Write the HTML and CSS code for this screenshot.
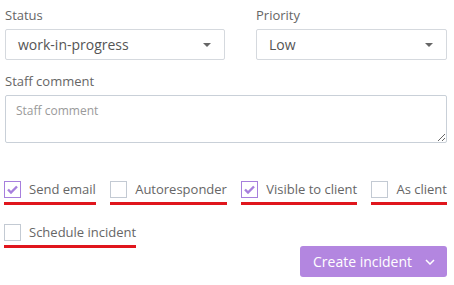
FILE: index.html
```html
<!DOCTYPE html>
<html lang="en">
<head>
  <meta charset="UTF-8">
  <title>New incident</title>
  <link rel="stylesheet" href="styles.css">
</head>
<body>
  <form class="incident-form">
    <div class="row two-cols">
      <div class="field">
        <label class="label">Status</label>
        <div class="select">
          <span>work-in-progress</span>
          <svg class="caret" width="8" height="4" viewBox="0 0 8 4"><path d="M0 0h8L4 4z" fill="#666"/></svg>
        </div>
      </div>
      <div class="field">
        <label class="label">Priority</label>
        <div class="select">
          <span>Low</span>
          <svg class="caret" width="8" height="4" viewBox="0 0 8 4"><path d="M0 0h8L4 4z" fill="#666"/></svg>
        </div>
      </div>
    </div>

    <div class="field">
      <label class="label">Staff comment</label>
      <textarea class="comment" placeholder="Staff comment"></textarea>
    </div>

    <!-- options -->
    <div class="options">
      <label class="check checked"><span class="box"><svg width="11" height="9" viewBox="0 0 11 9"><path d="M1 4.5l3 3L10 1.5" fill="none" stroke="#a77fdd" stroke-width="2.4"/></svg></span>Send email</label>
      <label class="check"><span class="box"></span>Autoresponder</label>
      <label class="check checked"><span class="box"><svg width="11" height="9" viewBox="0 0 11 9"><path d="M1 4.5l3 3L10 1.5" fill="none" stroke="#a77fdd" stroke-width="2.4"/></svg></span>Visible to client</label>
      <label class="check"><span class="box"></span>As client</label>
      <label class="check"><span class="box"></span>Schedule incident</label>
    </div>

    <div class="actions">
      <button type="button" class="btn-create">
        <span>Create incident</span>
        <svg width="10" height="6" viewBox="0 0 10 6"><path d="M1 1l4 4 4-4" fill="none" stroke="#fff" stroke-width="1.5"/></svg>
      </button>
    </div>
  </form>
</body>
</html>
```

FILE: styles.css
```css
body {
  margin: 0;
  font-family: "Open Sans", "Noto Sans", Arial, sans-serif;
  color: #666;
  background: #fff;
}

.incident-form {
  padding: 5px 7px 0 5px;
}

.two-cols {
  display: grid;
  grid-template-columns: 220px 1fr;
  gap: 31px;
}

.label {
  display: block;
  font-size: 13px;
  line-height: 20px;
  color: #666;
  margin-bottom: 4px;
}

.select {
  height: 31px;
  box-sizing: border-box;
  border: 1px solid #d5d9de;
  border-radius: 2px;
  display: flex;
  align-items: center;
  justify-content: space-between;
  padding: 0 13px 0 12px;
  font-size: 14px;
  color: #555;
}

.caret {
  margin-top: 1px;
}

.row + .field {
  margin-top: 11px;
}

.comment {
  display: block;
  width: 100%;
  height: 48px;
  box-sizing: border-box;
  border: 1px solid #c9d0d8;
  border-radius: 2px;
  padding: 6px 10px;
  font-family: inherit;
  font-size: 12px;
  color: #555;
  resize: vertical;
}

.comment::placeholder {
  color: #9a9a9a;
}

.options {
  display: flex;
  flex-wrap: wrap;
  justify-content: space-between;
  row-gap: 18px;
  margin-top: 37px;
}

.check {
  display: inline-flex;
  align-items: center;
  gap: 8px;
  font-size: 13px;
  color: #666;
  padding-bottom: 4px;
  border-bottom: 3px solid #e0161d;
  margin-left: -1px;
}

.box {
  width: 17px;
  height: 17px;
  box-sizing: border-box;
  border: 1px solid #c3cad3;
  display: flex;
  align-items: center;
  justify-content: center;
}

.checked .box {
  border-color: #a77fdd;
}

.actions {
  display: flex;
  justify-content: flex-end;
  margin-top: -2px;
}

.btn-create {
  width: 147px;
  height: 31px;
  border: none;
  border-radius: 3px;
  background: #b386e0;
  color: #fff;
  font-family: inherit;
  font-size: 14px;
  display: flex;
  align-items: center;
  justify-content: space-between;
  padding: 0 12px 0 13px;
  cursor: pointer;
}
```
